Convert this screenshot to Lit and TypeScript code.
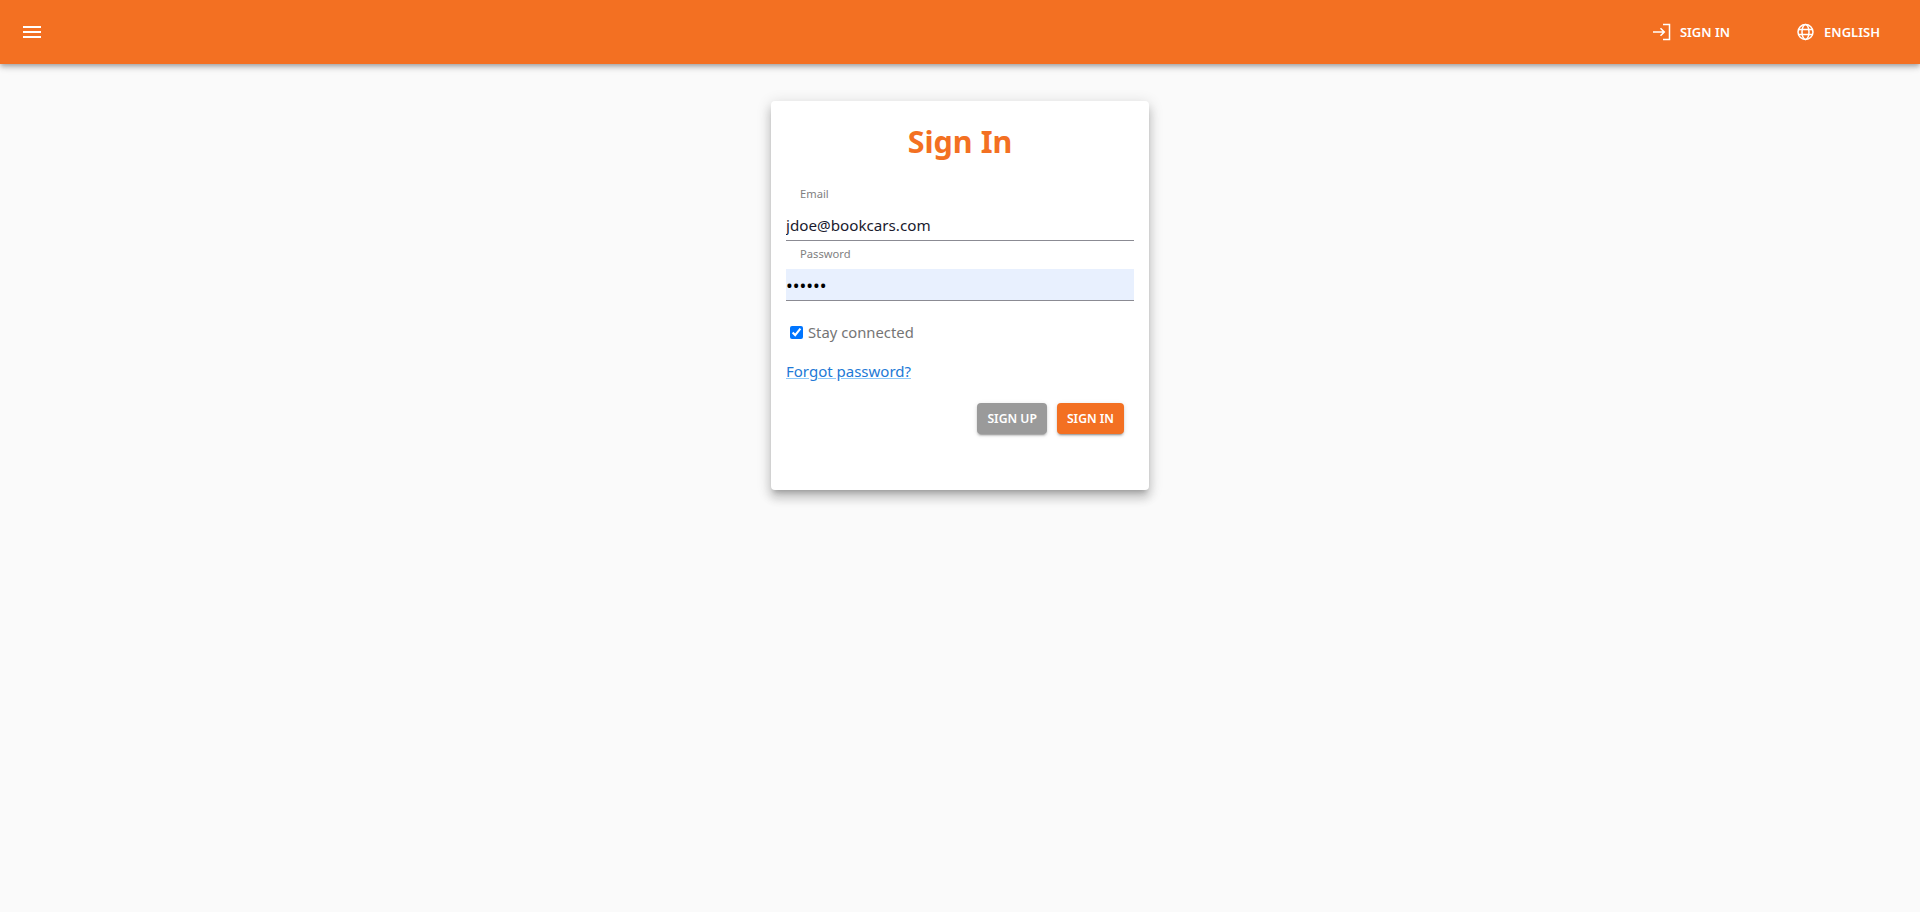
import { LitElement, html, css } from "lit";
import { customElement } from "lit/decorators.js";

@customElement("app-root")
export class AppRoot extends LitElement {
  static styles = css`
    :host {
      display: block;
      min-height: 912px;
      background: #fafafa;
      font-family: "Noto Sans", "Open Sans", sans-serif;
      color: #1a1a2e;
    }
    * { box-sizing: border-box; }
    .bar {
      height: 64px;
      background: #f37022;
      display: flex;
      align-items: center;
      padding: 0 40px 0 20px;
      color: #fff;
      box-shadow: 0 2px 4px -1px rgba(0,0,0,.2), 0 4px 5px 0 rgba(0,0,0,.14), 0 1px 10px 0 rgba(0,0,0,.12);
    }
    .menu { display: flex; width: 24px; height: 24px; }
    .spacer { flex: 1; }
    .nav {
      display: flex;
      align-items: center;
      gap: 8px;
      font-size: 13px;
      font-weight: 600;
      text-transform: uppercase;
    }
    .nav svg { display: block; width: 20px; height: 20px; fill: none; stroke: #fff; stroke-width: 1.5; }
    .nav + .nav { margin-left: 66px; }
    .main { display: flex; justify-content: center; padding-top: 37px; }
    .card {
      width: 378px;
      height: 389px;
      background: #fff;
      border-radius: 4px;
      padding: 0 15px;
      box-shadow: 0 5px 5px -3px rgba(0,0,0,.2), 0 8px 10px 1px rgba(0,0,0,.14), 0 3px 14px 2px rgba(0,0,0,.12);
      display: flex;
      flex-direction: column;
    }
    h1 {
      margin: 19px 0 0;
      height: 43px;
      line-height: 43px;
      font-size: 30.5px;
      font-weight: 700;
      text-align: center;
      color: #f37022;
    }
    .label {
      font-size: 11.2px;
      line-height: 16px;
      color: #7f7f7f;
      padding-left: 14px;
    }
    .email-label { margin-top: 23px; }
    .pass-label { margin-top: 5px; }
    input.text {
      display: block;
      width: 100%;
      border: 0;
      border-bottom: 1px solid #8b8b93;
      outline: 0;
      padding: 0;
      background: transparent;
      font: inherit;
      font-size: 15.2px;
      color: #1a1a2e;
    }
    input.email { height: 32px; margin-top: 7px; }
    input.pass { height: 32px; margin-top: 7px; background: #e8f0fe; color: #000; font-size: 18px; }
    .check {
      display: flex;
      align-items: center;
      margin-top: 19px;
      font-size: 14.8px;
      color: #757575;
      line-height: 24px;
    }
    .check input { width: 13px; height: 13px; margin: 0 5px 0 4px; accent-color: #0075ff; }
    .forgot {
      margin-top: 15px;
      font-size: 15px;
      line-height: 24px;
      color: #2279d6;
      text-decoration: underline;
      text-decoration-color: #90caf9;
      align-self: flex-start;
    }
    .actions { display: flex; justify-content: flex-end; gap: 10px; margin-top: 20px; padding-right: 10px; }
    .btn {
      height: 31px;
      border: 0;
      border-radius: 4px;
      padding: 0 10px;
      color: #fff;
      font: inherit;
      font-size: 12.2px;
      font-weight: 600;
      text-transform: uppercase;
      box-shadow: 0 3px 1px -2px rgba(0,0,0,.2), 0 2px 2px 0 rgba(0,0,0,.14), 0 1px 5px 0 rgba(0,0,0,.12);
    }
    .grey { background: #9a9a9a; }
    .orange { background: #f37022; }
  `;

  render() {
    return html`
      <header class="bar">
        <span class="menu">
          <svg viewBox="0 0 24 24" width="24" height="24" fill="#fff"><path d="M3 18h18v-2H3v2zm0-5h18v-2H3v2zm0-7v2h18V6H3z"/></svg>
        </span>
        <span class="spacer"></span>
        <span class="nav">
          <svg viewBox="0 0 20 20"><path d="M1 10h11M8.500 6.200 12.300 10l-3.800 3.800M11 2.500h6.500v15H11"/></svg>
          Sign in
        </span>
        <span class="nav">
          <svg viewBox="0 0 20 20"><circle cx="9.500" cy="10" r="7.500"/><ellipse cx="9.500" cy="10" rx="3.500" ry="7.500"/><path d="M2.300 7.500h14.400M2.300 12.500h14.400"/></svg>
          English
        </span>
      </header>
      <main class="main">
        <section class="card">
          <h1>Sign In</h1>
          <div class="label email-label">Email</div>
          <input class="text email" type="text" .value=${"jdoe@bookcars.com"} />
          <div class="label pass-label">Password</div>
          <input class="text pass" type="password" .value=${"secret"} />
          <label class="check"><input type="checkbox" checked />Stay connected</label>
          <a class="forgot">Forgot password?</a>
          <div class="actions">
            <button class="btn grey">Sign up</button>
            <button class="btn orange">Sign in</button>
          </div>
        </section>
      </main>
    `;
  }
}
